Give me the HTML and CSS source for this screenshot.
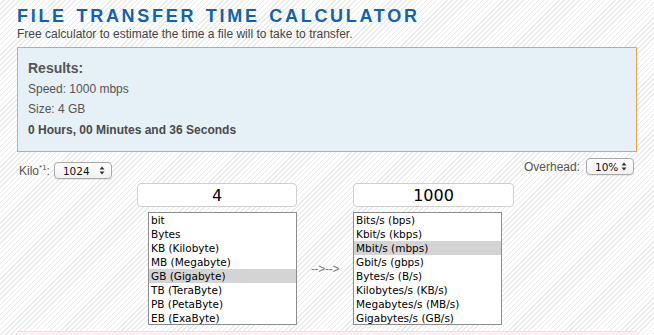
FILE: index.html
```html
<!DOCTYPE html>
<html>
<head>
<meta charset="utf-8">
<title>File Transfer Time Calculator</title>
<link rel="stylesheet" href="styles.css">
</head>
<body>
<div class="page">
  <h1 class="title">FILE TRANSFER TIME CALCULATOR</h1>
  <p class="subtitle">Free calculator to estimate the time a file will to take to transfer.</p>

  <div class="results">
    <div class="res-head">Results:</div>
    <div class="res-line">Speed: 1000 mbps</div>
    <div class="res-line">Size: 4 GB</div>
    <div class="res-line res-bold">0 Hours, 00 Minutes and 36 Seconds</div>
  </div>

  <div class="options">
    <div class="opt opt-kilo">
      <span class="lbl">Kilo<sup class="sup">*1</sup>:</span>
      <div class="select select-kilo">
        <span class="select-val">1024</span>
        <svg class="select-arrows" width="6" height="9" viewBox="0 0 6 9"><path d="M3 0.5 L5.5 3.5 L0.5 3.5 Z M3 8.5 L5.5 5.5 L0.5 5.5 Z" fill="#333"/></svg>
      </div>
    </div>
    <div class="opt opt-overhead">
      <span class="lbl">Overhead:</span>
      <div class="select select-over">
        <span class="select-val">10%</span>
        <svg class="select-arrows" width="6" height="9" viewBox="0 0 6 9"><path d="M3 0.5 L5.5 3.5 L0.5 3.5 Z M3 8.5 L5.5 5.5 L0.5 5.5 Z" fill="#333"/></svg>
      </div>
    </div>
  </div>

  <div class="converter">
    <input class="num num-left" type="text" value="4">
    <div class="gap-cell"></div>
    <input class="num num-right" type="text" value="1000">

    <div class="list list-left">
      <div class="item">bit</div>
      <div class="item">Bytes</div>
      <div class="item">KB (Kilobyte)</div>
      <div class="item">MB (Megabyte)</div>
      <div class="item item-sel">GB (Gigabyte)</div>
      <div class="item">TB (TeraByte)</div>
      <div class="item">PB (PetaByte)</div>
      <div class="item">EB (ExaByte)</div>
    </div>
    <div class="arrow">--&gt;--&gt;</div>
    <div class="list list-right">
      <div class="item">Bits/s (bps)</div>
      <div class="item">Kbit/s (kbps)</div>
      <div class="item item-sel">Mbit/s (mbps)</div>
      <div class="item">Gbit/s (gbps)</div>
      <div class="item">Bytes/s (B/s)</div>
      <div class="item">Kilobytes/s (KB/s)</div>
      <div class="item">Megabytes/s (MB/s)</div>
      <div class="item">Gigabytes/s (GB/s)</div>
    </div>
  </div>

  <div class="note"></div>
</div>
</body>
</html>
```

FILE: styles.css
```css
html, body {
  margin: 0;
  padding: 0;
}
body {
  font-family: "Liberation Sans", Arial, Helvetica, sans-serif;
  color: #555;
  background-color: #fff;
  background-image: repeating-linear-gradient(135deg, #fff 0px, #fff 2.6px, #ebebeb 2.6px, #ebebeb 3.6px);
  min-height: 335px;
}
.page {
  width: 620px;
  margin: 0 auto;
}
.title {
  margin: 5px 0 0 0;
  font-size: 18px;
  line-height: 22px;
  font-weight: bold;
  letter-spacing: 2.7px;
  word-spacing: 2px;
  color: #1162b0;
}
.subtitle {
  margin: 0;
  font-size: 12px;
  line-height: 15px;
  color: #444;
}
.results {
  margin-top: 5px;
  border: 1px solid #f6a13b;
  background: #e6f0f7;
  padding: 10px 10px 11px 10px;
}
.res-head {
  font-size: 14px;
  font-weight: bold;
  line-height: 20.5px;
  color: #555;
}
.res-line {
  font-size: 12px;
  line-height: 20.5px;
  color: #555;
}
.res-bold {
  font-weight: bold;
  color: #4a4a4a;
}
.options {
  display: flex;
  justify-content: space-between;
  align-items: flex-start;
  margin-top: 6px;
}
.opt {
  display: flex;
  align-items: center;
  gap: 4px;
}
.opt-kilo {
  margin-top: 4px;
  padding-left: 2px;
}
.opt-overhead {
  padding-right: 3px;
  gap: 6px;
}
.lbl {
  font-size: 12px;
  color: #555;
}
.sup {
  font-size: 8px;
  vertical-align: 5px;
  line-height: 0;
}
.select {
  box-sizing: border-box;
  height: 17px;
  display: flex;
  align-items: center;
  justify-content: space-between;
  padding: 0 6px 0 8px;
  border: 1px solid #a9a9a9;
  border-radius: 4px;
  background: linear-gradient(#ffffff, #f1f1f1);
  box-shadow: 0 1px 1px rgba(0,0,0,0.08);
  font-family: "DejaVu Sans", Verdana, sans-serif;
  font-size: 10.5px;
  color: #111;
}
.select-kilo {
  width: 58px;
}
.select-over {
  width: 48px;
}
.select-arrows {
  display: block;
}
.converter {
  display: grid;
  grid-template-columns: 160px 56px 161px;
  grid-template-rows: 24px 113px;
  row-gap: 5px;
  margin-top: 4px;
  padding-left: 120px;
}
.num {
  box-sizing: border-box;
  width: 100%;
  height: 24px;
  margin: 0;
  padding: 0;
  border: 1px solid #cfcfcf;
  border-radius: 4px;
  background: #fff;
  text-align: center;
  font-family: "DejaVu Sans", Verdana, sans-serif;
  font-size: 16px;
  color: #000;
  outline: none;
}
.list {
  box-sizing: border-box;
  width: 149px;
  height: 113px;
  border: 1px solid #8c8c8c;
  background: #fff;
  overflow: hidden;
  font-family: "DejaVu Sans", Verdana, sans-serif;
  font-size: 10.5px;
  color: #000;
}
.list-left {
  justify-self: end;
}
.list-right {
  justify-self: start;
}
.item {
  height: 14px;
  line-height: 14px;
  padding-left: 2px;
  white-space: nowrap;
}
.item-sel {
  background: #d4d4d4;
}
.arrow {
  align-self: center;
  justify-self: center;
  font-size: 12px;
  color: #777;
  letter-spacing: -0.3px;
}
.note {
  margin-top: 6px;
  height: 4px;
  border-top: 1px solid #f6dde1;
  background: #fcf0f2;
}
```
